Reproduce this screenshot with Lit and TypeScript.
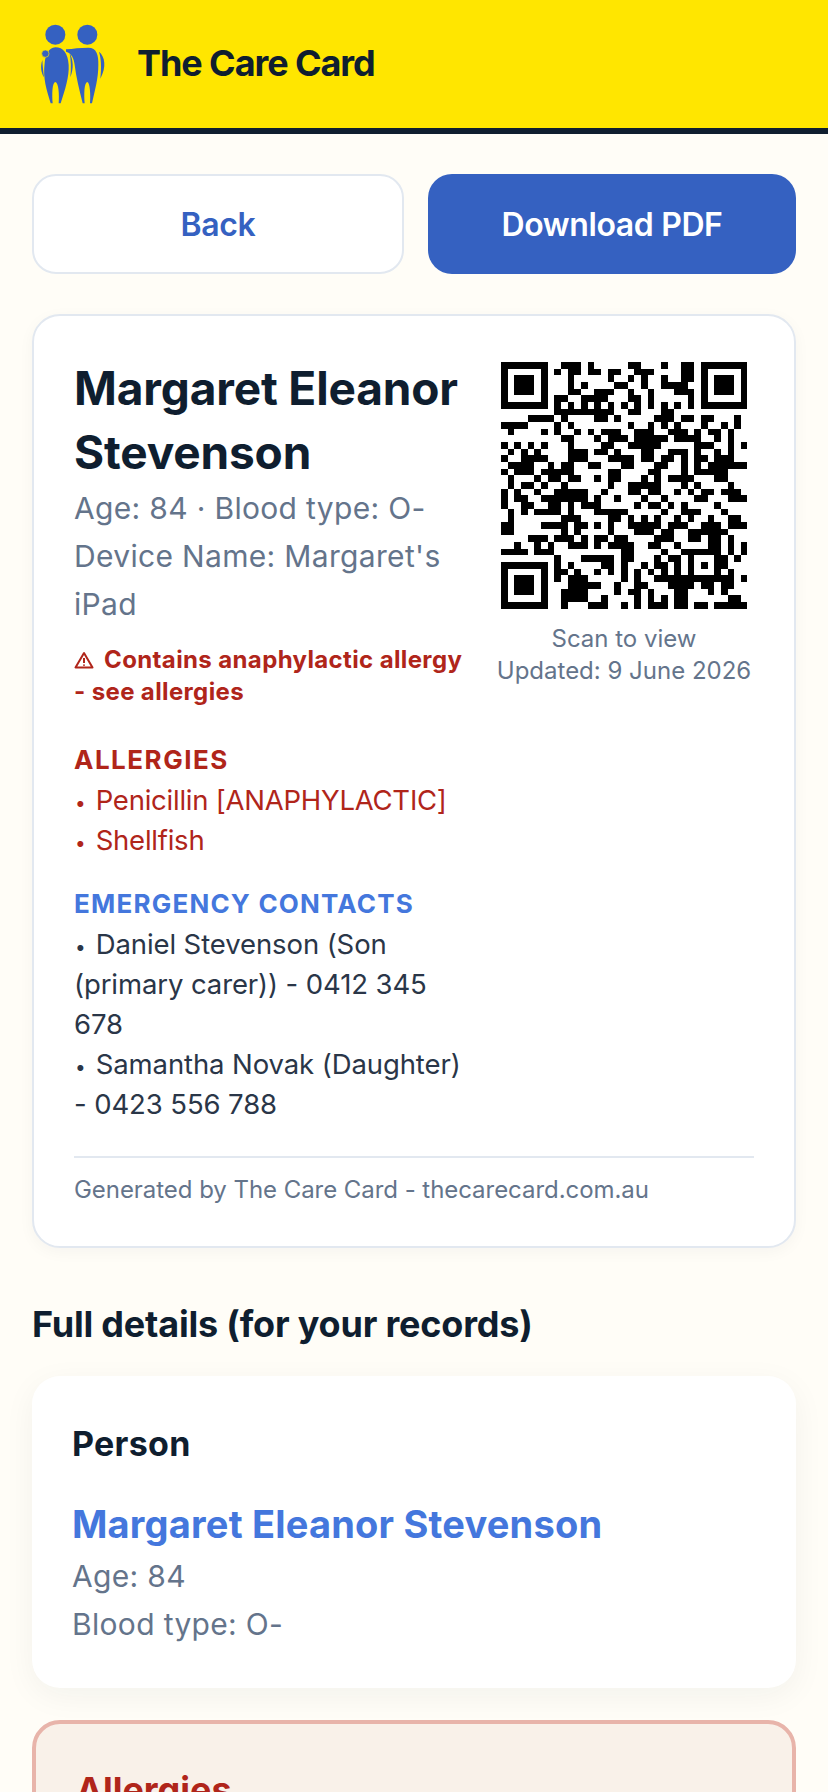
import { LitElement, html, css, svg } from "lit";
import { customElement } from "lit/decorators.js";

type Run = number | [number, number];
const F: Run[] = [[0, 6]];
const FM: Run[] = [0, 6];
const FC: Run[] = [0, [2, 4], 6];
const finderRows = [F, FM, FC, FC, FC, FM, F];
const rows: Run[][] = [
  [[9,11],13,[19,20],24,[27,28]],
  [8,[10,11],[13,14],[16,17],[20,22],[27,28]],
  [10,16,19,21,24,[27,28]],
  [10,12,[17,18],21,[24,27]],
  [[10,11],[14,16],19,22,[26,28]],
  [[8,9],[12,15],[19,20],22,28],
  [8,10,12,14,16,18,20,22,24,26,28],
  [[8,16],[19,20],[24,25]],
  [[4,7],9,[14,15],17,[23,25],[27,28],[30,31],35],
  [[0,3],8,10,19,22,24,26,30,33,35],
  [1,6,8,11,13,[15,17],[20,22],[25,27],29,[31,32],34],
  [[9,10],14,[16,18],[20,24],[26,29],32,34],
  [0,2,4,6,10,[15,16],[19,23],[29,31],34,36],
  [1,3,5,[10,12],[14,15],17,[21,22],[25,27],29,32,34],
  [0,[3,6],[10,12],[16,19],[21,22],[24,25],27,[29,30],[32,34]],
  [[1,4],7,[9,10],[13,14],[18,19],[23,24],27,29,[31,36]],
  [0,[2,4],[6,8],[9,10],[16,17],[22,23],27,[29,33]],
  [1,5,[7,8],[10,11],14,[16,17],21,23,[25,28],[32,33]],
  [1,[3,4],6,9,16,[19,23],27,29,34],
  [0,2,5,[8,12],15,[19,20],[22,23],26,28,[30,31],[33,35]],
  [0,[2,3],[6,12],14,17,21,24,[29,30],[34,36]],
  [0,[3,4],[7,8],10,[12,14],20,[22,23],25,27,32],
  [1,3,[5,8],10,[14,18],24,[27,29],33],
  [1,[9,11],[16,17],19,21,23,26,28,31,[34,35]],
  [[0,1],[6,9],[11,12],14,16,[19,23],[25,27],[30,32],[34,36]],
  [[0,1],9,11,16,[20,22],[24,25],[28,33]],
  [[4,6],[8,10],12,[14,15],[17,18],[23,25],[28,29],[31,32],34],
  [2,5,7,[10,12],14,[16,19],[22,23],26,[31,32],34,36],
  [[0,3],[5,7],[18,19],24,[27,32],34,36],
  [8,[12,16],[18,19],23,[25,26],28,[32,33],35],
  [8,10,[15,16],18,21,[23,24],26,28,30,[32,33]],
  [[8,9],11,14,16,18,20,22,24,26,28,32,34],
  [8,[10,12],18,20,[23,34],36],
  [[10,14],17,[20,21],[25,28],[30,31],[33,34]],
  [[9,12],17,[19,20],22,[26,27],31,33],
  [[9,12],15,20,22,24,[26,27],[34,35]],
  [9,[13,15],18,20,[22,24],[26,27],[29,30],[32,36]],
];

function qrPath(): string {
  let d = "";
  const add = (r: number, a: number, b: number) => { d += `M${a} ${r}h${b - a + 1}v1h-${b - a + 1}z`; };
  const put = (r: number, runs: Run[], off: number) => {
    for (const x of runs) {
      if (Array.isArray(x)) add(r, x[0] + off, x[1] + off);
      else add(r, x + off, x + off);
    }
  };
  rows.forEach((runs, r) => put(r, runs, 0));
  finderRows.forEach((runs, r) => {
    put(r, runs, 0);
    put(r, runs, 30);
    put(r + 30, runs, 0);
  });
  return d;
}

@customElement("app-root")
export class AppRoot extends LitElement {
  static styles = css`
    :host { display: block; background: #fffdf7; font-family: Inter, "Liberation Sans", sans-serif; height: 1792px; overflow: hidden; }
    * { box-sizing: border-box; }
    .top { height: 134px; background: #ffe600; border-bottom: 6px solid #0f1e2f; display: flex; align-items: center; padding-left: 30px; gap: 17px; }
    .logo { width: 90px; height: 100px; flex: none; margin-top: -8px; }
    .brand { font-size: 36px; font-weight: 700; letter-spacing: -1.08px; color: #0f1e2f; margin-top: -2px; }
    main { padding: 40px 32px 0; display: flex; flex-direction: column; }
    .actions { display: flex; gap: 24px; }
    .btn { flex: 1 1 0; box-sizing: content-box; height: 100px; border-radius: 24px; font-size: 32px; letter-spacing: -0.38px; font-weight: 600; display: flex; align-items: center; justify-content: center; }
    .btn.ghost { background: #fff; border: 2px solid #e2e8f0; color: #3561c1; height: 96px; }
    .btn.solid { background: #3561c1; color: #fff; }
    .card { margin-top: 40px; background: #fff; border: 2px solid #e2e8f0; border-radius: 28px; padding: 40px; box-shadow: 0 4px 16px rgba(15,30,47,.04); }
    .grid { display: grid; grid-template-columns: 1fr 260px; gap: 24px; }
    h1 { margin: 0; font-size: 46px; letter-spacing: -0.15px; line-height: 64px; font-weight: 700; color: #0f1e2f; }
    .meta { font-size: 30px; letter-spacing: 0.33px; line-height: 48px; color: #64748b; }
    .warn { margin-top: 16px; font-size: 24px; letter-spacing: 0.37px; line-height: 32px; font-weight: 700; color: #b0251a; }
    .warn svg { width: 20px; height: 18px; vertical-align: -1px; margin-right: 4px; }
    .sec { margin-top: 24px; font-size: 27.5px; letter-spacing: -0.1px; line-height: 40px; }
    .sec.first { margin-top: 32px; letter-spacing: -0.24px; }
    .sec h3 { margin: 0; font-size: 26px; line-height: 40px; font-weight: 700; }
    .red { color: #b0251a; }
    .red h3 { letter-spacing: 1.5px; }
    .blue h3 { color: #4477dd; letter-spacing: 1.2px; }
    .blue { color: #2a3648; }
    .b { font-size: 19px; line-height: 1; margin-left: 1px; margin-right: 10px; letter-spacing: 0; }
    .qrcol { display: flex; flex-direction: column; align-items: center; padding-top: 6px; }
    .qr { width: 246.67px; height: 246.67px; display: block; }
    .cap { margin-top: 14px; font-size: 24px; line-height: 32px; color: #64748b; text-align: center; }
    .foot { margin-top: 32px; border-top: 2px solid #e2e8f0; padding-top: 16px; font-size: 24px; letter-spacing: -0.05px; line-height: 32px; color: #64748b; }
    h2 { margin: 52px 0 0; font-size: 36px; letter-spacing: -0.2px; line-height: 48px; font-weight: 700; color: #0f1e2f; }
    .panel { margin-top: 28px; background: #fff; border-radius: 28px; padding: 40px; box-shadow: 0 8px 32px rgba(15,30,47,.05); }
    .panel h4 { margin: 4px 0 0; font-size: 34px; letter-spacing: 0.3px; line-height: 48px; font-weight: 700; color: #0f1e2f; }
    .person { margin-top: 28px; font-size: 38px; letter-spacing: 0.2px; line-height: 56px; font-weight: 700; color: #4477dd; }
    .alert { margin-top: 32px; background: #f9f1e9; border: 4px solid #e8b4aa; border-radius: 28px; padding: 42px 40px; }
    .alert h4 { margin: 0; font-size: 36px; line-height: 48px; font-weight: 700; color: #b0251a; }
  `;

  render() {
    return html`
      <header class="top">
        <svg class="logo" viewBox="0 0 270 300" fill="#3561c1">
          <circle cx="76" cy="74" r="30"></circle>
          <circle cx="172" cy="74" r="30"></circle>
          <path d="M76 112C100 112 114 130 116 165C118 200 105 240 92 280L86 280C88 255 86 218 76 216C66 218 66 255 68 280L62 280C50 240 38 205 44 160C46 135 56 113 76 112Z"></path>
          <circle cx="46" cy="131" r="11" stroke="#ffe600" stroke-width="2"></circle>
          <path d="M37 150C30 170 34 190 42 202C40 185 38 170 37 150Z"></path>
          <path d="M119 130C130 150 132 175 121 202C124 175 123 150 119 130Z"></path>
          <path d="M108 118C130 116 150 113 175 113C200 113 206 135 205 165C205 205 195 240 186 280L180 280C182 255 180 218 172 216C162 218 162 255 164 280L158 280C148 240 138 200 134 165C132 145 125 130 108 125Z"></path>
          <path d="M207 125C225 140 230 170 211 206C215 170 213 145 207 125Z"></path>
        </svg>
        <div class="brand">The Care Card</div>
      </header>
      <main>
        <div class="actions">
          <div class="btn ghost">Back</div>
          <div class="btn solid">Download PDF</div>
        </div>
        <section class="card">
          <div class="grid">
            <div>
              <h1>Margaret Eleanor Stevenson</h1>
              <div class="meta">Age: 84 · Blood type: O-</div>
              <div class="meta">Device Name: Margaret's iPad</div>
              <div class="warn">
                <svg viewBox="0 0 20 18" fill="none" stroke="currentColor" stroke-width="2" stroke-linejoin="round"><path d="M10 2L1.5 16.5h17z"></path><path d="M10 7v5M10 13.5v1.2"></path></svg>
                Contains anaphylactic allergy - see allergies
              </div>
              <div class="sec first red"><h3>ALLERGIES</h3><div><span class="b">•</span>Penicillin [ANAPHYLACTIC]</div><div><span class="b">•</span>Shellfish</div></div>
              <div class="sec blue"><h3>EMERGENCY CONTACTS</h3><div><span class="b">•</span>Daniel Stevenson (Son (primary carer)) - 0412 345 678</div><div><span class="b">•</span>Samantha Novak (Daughter) - 0423 556 788</div></div>
            </div>
            <div class="qrcol">
              <svg class="qr" viewBox="0 0 37 37" shape-rendering="crispEdges">${svg`<path d=${qrPath()} fill="#000"></path>`}</svg>
              <div class="cap">Scan to view<br />Updated: 9 June 2026</div>
            </div>
          </div>
          <div class="foot">Generated by The Care Card - thecarecard.com.au</div>
        </section>
        <h2>Full details (for your records)</h2>
        <section class="panel">
          <h4>Person</h4>
          <div class="person">Margaret Eleanor Stevenson</div>
          <div class="meta">Age: 84</div>
          <div class="meta">Blood type: O-</div>
        </section>
        <section class="alert"><h4>Allergies</h4></section>
      </main>
    `;
  }
}
